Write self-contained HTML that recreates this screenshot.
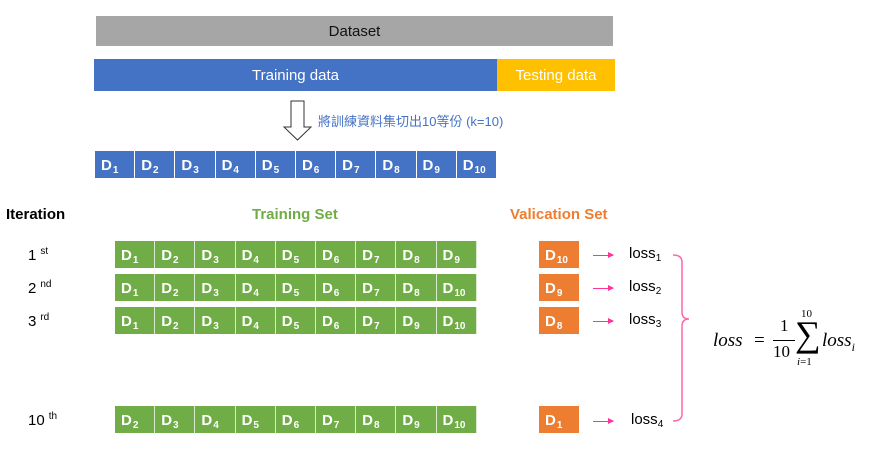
<!DOCTYPE html>
<html><head><meta charset="utf-8"><style>
body{margin:0;width:875px;height:460px;background:#fff;position:relative;overflow:hidden;font-family:"Liberation Sans","Noto Sans CJK TC",sans-serif}
.a{position:absolute}
.bar{position:absolute;display:flex;align-items:center;justify-content:center;font-size:15px}
.row{position:absolute;display:flex;height:27px}
.c{box-sizing:border-box;border-right:1.5px solid #fff;color:#fff;font-weight:bold;font-size:15px;padding-left:6px;height:100%;line-height:29px}
sub.s{font-size:10px;vertical-align:-3px;line-height:0;margin-left:1px}
.b .c{background:#4472c4;width:40.2px}
.g .c{background:#70ad47;width:40.2px;border-color:#d9ead0}
.o{position:absolute;background:#ed7d31;color:#fff;font-weight:bold;font-size:15px;width:40px;height:27px;box-sizing:border-box;padding-left:6px;line-height:29px}
.it{position:absolute;font-size:15px;left:28px}
.it sup{font-size:10px;vertical-align:6px;margin-left:4px}
.loss{position:absolute;font-size:15px;left:629px}
.loss sub{font-size:10px;vertical-align:-3px;line-height:0}
.arr{position:absolute;left:593px;width:20px;height:1px;background:#ff3399}
.arr:after{content:"";position:absolute;right:-1px;top:-3px;border-left:6px solid #ff3399;border-top:3.5px solid transparent;border-bottom:3.5px solid transparent}
</style></head><body>
<div class="bar" style="left:96px;top:16px;width:517px;height:30px;background:#a6a6a6;color:#111">Dataset</div>
<div class="bar" style="left:94px;top:59px;width:403px;height:32px;background:#4472c4;color:#fff">Training data</div>
<div class="bar" style="left:497px;top:59px;width:118px;height:32px;background:#ffc000;color:#fff">Testing data</div>
<svg class="a" style="left:283px;top:100px" width="30" height="42"><path d="M8 1H21V27H28L14.5 40L1 27H8Z" fill="#fff" stroke="#333" stroke-width="1"/></svg>
<div class="a" style="left:318px;top:111px;font-size:13px;color:#4472c4">將訓練資料集切出10等份 (k=10)</div>
<div class="row b" style="left:95px;top:151px"><div class="c">D<sub class="s">1</sub></div><div class="c">D<sub class="s">2</sub></div><div class="c">D<sub class="s">3</sub></div><div class="c">D<sub class="s">4</sub></div><div class="c">D<sub class="s">5</sub></div><div class="c">D<sub class="s">6</sub></div><div class="c">D<sub class="s">7</sub></div><div class="c">D<sub class="s">8</sub></div><div class="c">D<sub class="s">9</sub></div><div class="c">D<sub class="s">10</sub></div></div>
<div class="a" style="left:6px;top:206px;font-weight:bold;font-size:15px">Iteration</div>
<div class="a" style="left:252px;top:206px;font-weight:bold;font-size:15px;color:#70ad47">Training Set</div>
<div class="a" style="left:510px;top:206px;font-weight:bold;font-size:15px;color:#ed7d31">Valication Set</div>
<div class="it" style="top:246px">1<sup>st</sup></div>
<div class="it" style="top:279px">2<sup>nd</sup></div>
<div class="it" style="top:312px">3<sup>rd</sup></div>
<div class="it" style="top:411px">10<sup>th</sup></div>
<div class="row g" style="left:115px;top:241px"><div class="c">D<sub class="s">1</sub></div><div class="c">D<sub class="s">2</sub></div><div class="c">D<sub class="s">3</sub></div><div class="c">D<sub class="s">4</sub></div><div class="c">D<sub class="s">5</sub></div><div class="c">D<sub class="s">6</sub></div><div class="c">D<sub class="s">7</sub></div><div class="c">D<sub class="s">8</sub></div><div class="c">D<sub class="s">9</sub></div></div>
<div class="row g" style="left:115px;top:274px"><div class="c">D<sub class="s">1</sub></div><div class="c">D<sub class="s">2</sub></div><div class="c">D<sub class="s">3</sub></div><div class="c">D<sub class="s">4</sub></div><div class="c">D<sub class="s">5</sub></div><div class="c">D<sub class="s">6</sub></div><div class="c">D<sub class="s">7</sub></div><div class="c">D<sub class="s">8</sub></div><div class="c">D<sub class="s">10</sub></div></div>
<div class="row g" style="left:115px;top:307px"><div class="c">D<sub class="s">1</sub></div><div class="c">D<sub class="s">2</sub></div><div class="c">D<sub class="s">3</sub></div><div class="c">D<sub class="s">4</sub></div><div class="c">D<sub class="s">5</sub></div><div class="c">D<sub class="s">6</sub></div><div class="c">D<sub class="s">7</sub></div><div class="c">D<sub class="s">9</sub></div><div class="c">D<sub class="s">10</sub></div></div>
<div class="row g" style="left:115px;top:406px"><div class="c">D<sub class="s">2</sub></div><div class="c">D<sub class="s">3</sub></div><div class="c">D<sub class="s">4</sub></div><div class="c">D<sub class="s">5</sub></div><div class="c">D<sub class="s">6</sub></div><div class="c">D<sub class="s">7</sub></div><div class="c">D<sub class="s">8</sub></div><div class="c">D<sub class="s">9</sub></div><div class="c">D<sub class="s">10</sub></div></div>
<div class="o" style="left:539px;top:241px">D<sub class="s">10</sub></div>
<div class="o" style="left:539px;top:274px">D<sub class="s">9</sub></div>
<div class="o" style="left:539px;top:307px">D<sub class="s">8</sub></div>
<div class="o" style="left:539px;top:406px">D<sub class="s">1</sub></div>
<div class="arr" style="top:255px"></div>
<div class="arr" style="top:288px"></div>
<div class="arr" style="top:321px"></div>
<div class="arr" style="top:421px"></div>
<div class="loss" style="top:245px">loss<sub>1</sub></div>
<div class="loss" style="top:278px">loss<sub>2</sub></div>
<div class="loss" style="top:311px">loss<sub>3</sub></div>
<div class="loss" style="top:411px;left:631px">loss<sub>4</sub></div>
<svg class="a" style="left:670px;top:250px" width="25" height="180"><path d="M3 5Q12 5 12 12V62Q12 69 19 69Q12 69 12 76V164Q12 171 3 171" fill="none" stroke="#ff66aa" stroke-width="1.5"/></svg>
<div class="a" style="left:713px;top:330px;font-family:'Liberation Serif',serif;font-style:italic;font-size:19px">loss</div>
<div class="a" style="left:754px;top:330px;font-family:'Liberation Serif',serif;font-size:19px">=</div>
<div class="a" style="left:780px;top:316px;font-family:'Liberation Serif',serif;font-size:17px">1</div>
<div class="a" style="left:773px;top:340px;width:22px;height:1px;background:#000"></div>
<div class="a" style="left:773px;top:342px;font-family:'Liberation Serif',serif;font-size:17px">10</div>
<div class="a" style="left:801px;top:308px;font-family:'Liberation Serif',serif;font-size:11px">10</div>
<div class="a" style="left:795px;top:316px;font-family:'Liberation Serif',serif;font-size:36px;line-height:36px">∑</div>
<div class="a" style="left:797px;top:356px;font-family:'Liberation Serif',serif;font-size:11px"><i>i</i>=1</div>
<div class="a" style="left:822px;top:330px;font-family:'Liberation Serif',serif;font-style:italic;font-size:19px">loss<sub style="font-size:12px">i</sub></div>
</body></html>
